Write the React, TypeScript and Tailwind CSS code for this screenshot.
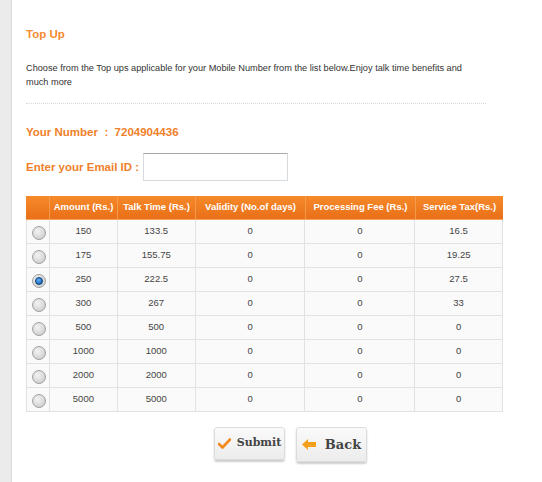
const rows = [
  ["150", "133.5", "0", "0", "16.5"],
  ["175", "155.75", "0", "0", "19.25"],
  ["250", "222.5", "0", "0", "27.5"],
  ["300", "267", "0", "0", "33"],
  ["500", "500", "0", "0", "0"],
  ["1000", "1000", "0", "0", "0"],
  ["2000", "2000", "0", "0", "0"],
  ["5000", "5000", "0", "0", "0"],
];

const widths = ["w-[68px]", "w-[78px]", "w-[110px]", "w-[110px]", "w-[87px]"];
const heads = ["Amount (Rs.)", "Talk Time (Rs.)", "Validity (No.of days)", "Processing Fee (Rs.)", "Service Tax(Rs.)"];

function Radio({ checked }: { checked: boolean }) {
  return (
    <div className="w-[14px] h-[14px] rounded-full border border-[#a0a0a0] bg-[radial-gradient(circle_at_40%_35%,#f4f4f4,#c4c4c4)] flex items-center justify-center">
      {checked && <div className="w-[8px] h-[8px] rounded-full bg-[radial-gradient(circle_at_40%_35%,#5fb3ff,#0a4f9c)] border border-[#083b75]"></div>}
    </div>
  );
}

function CheckIcon() {
  return (
    <svg width="13" height="11" viewBox="0 0 13 11">
      <path d="M1 6 L4.5 9.5 L12 1.5" fill="none" stroke="#f28a1c" strokeWidth="2.6" strokeLinecap="round" strokeLinejoin="round" />
    </svg>
  );
}

function ArrowIcon() {
  return (
    <svg width="14" height="11" viewBox="0 0 14 11">
      <path d="M0 5.5 L6 0 L6 3 L14 3 L14 8 L6 8 L6 11 Z" fill="#f5a01a" />
    </svg>
  );
}

export default function App() {
  return (
    <div className="flex min-h-[482px] bg-white font-['Liberation_Sans',Arial,sans-serif]">
      <div className="w-[12px] shrink-0 bg-[#ebebeb] border-r border-[#dcdcdc]"></div>
      <div className="pl-[14px] w-[492px]">
        <div className="w-[460px]">
          <div className="pt-[27px] text-[11.5px] leading-[14px] font-bold text-[#f68b2f]">Top Up</div>
          <p className="mt-[20px] text-[9.2px] leading-[14px] text-[#333]">
            Choose from the Top ups applicable for your Mobile Number from the list below.Enjoy talk time benefits and much more
          </p>
          <div className="mt-[14px] border-b border-dotted border-[#d8d8d8]"></div>
        </div>

        <div className="mt-[21px] text-[11.5px] leading-[14px] font-bold text-[#f07f2a]">
          Your Number&nbsp; :&nbsp; 7204904436
        </div>

        <div className="mt-[14px] flex items-center">
          <div className="text-[11.5px] leading-[14px] font-bold text-[#f07f2a] w-[117px] whitespace-nowrap">Enter your Email ID :</div>
          <input className="w-[145px] h-[28px] border border-[#d6dbe0] border-t-[#a8a8a8] bg-white outline-none" />
        </div>

        <div className="mt-[15px] w-[477px]">
          <div className="flex h-[24px] bg-[linear-gradient(#f68a2a,#e96f18)] text-white text-[9.5px] font-bold border-b border-[#f5a25c]">
            <div className="w-[24px] border-r border-[#f59a4a]"></div>
            {heads.map((h, i) => (
              <div key={i} className={`${widths[i]} flex items-center justify-center ${i < 4 ? "border-r border-[#f59a4a]" : ""}`}>{h}</div>
            ))}
          </div>
          {rows.map((r, ri) => (
            <div key={ri} className="flex h-[24px] bg-[#fafafa] border-b border-x border-[#e2e2e2] text-[9.5px] text-[#444]">
              <div className="w-[23px] flex items-center justify-center pl-[3px] pt-[2px] border-r border-[#e2e2e2]">
                <Radio checked={ri === 2} />
              </div>
              {r.map((c, ci) => (
                <div key={ci} className={`${widths[ci]} flex items-center justify-center ${ci < 4 ? "border-r border-[#e2e2e2]" : ""}`}>{c}</div>
              ))}
            </div>
          ))}
        </div>

        <div className="mt-[15px] flex gap-[11px] pl-[188px]">
          <button className="w-[71px] h-[33px] flex items-center justify-center gap-[6px] rounded-[3px] border border-[#dcdcdc] bg-[linear-gradient(#fafafa,#ececec)] shadow-[0_2px_2px_rgba(0,0,0,0.2)] font-['DejaVu_Serif',serif] font-bold text-[11px] text-[#444]">
            <CheckIcon />
            Submit
          </button>
          <button className="w-[71px] h-[35px] flex items-center justify-center gap-[9px] rounded-[3px] border border-[#dcdcdc] bg-[linear-gradient(#fafafa,#ececec)] shadow-[0_2px_2px_rgba(0,0,0,0.2)] font-['DejaVu_Serif',serif] font-bold text-[13px] text-[#444]">
            <ArrowIcon />
            Back
          </button>
        </div>
      </div>
    </div>
  );
}
